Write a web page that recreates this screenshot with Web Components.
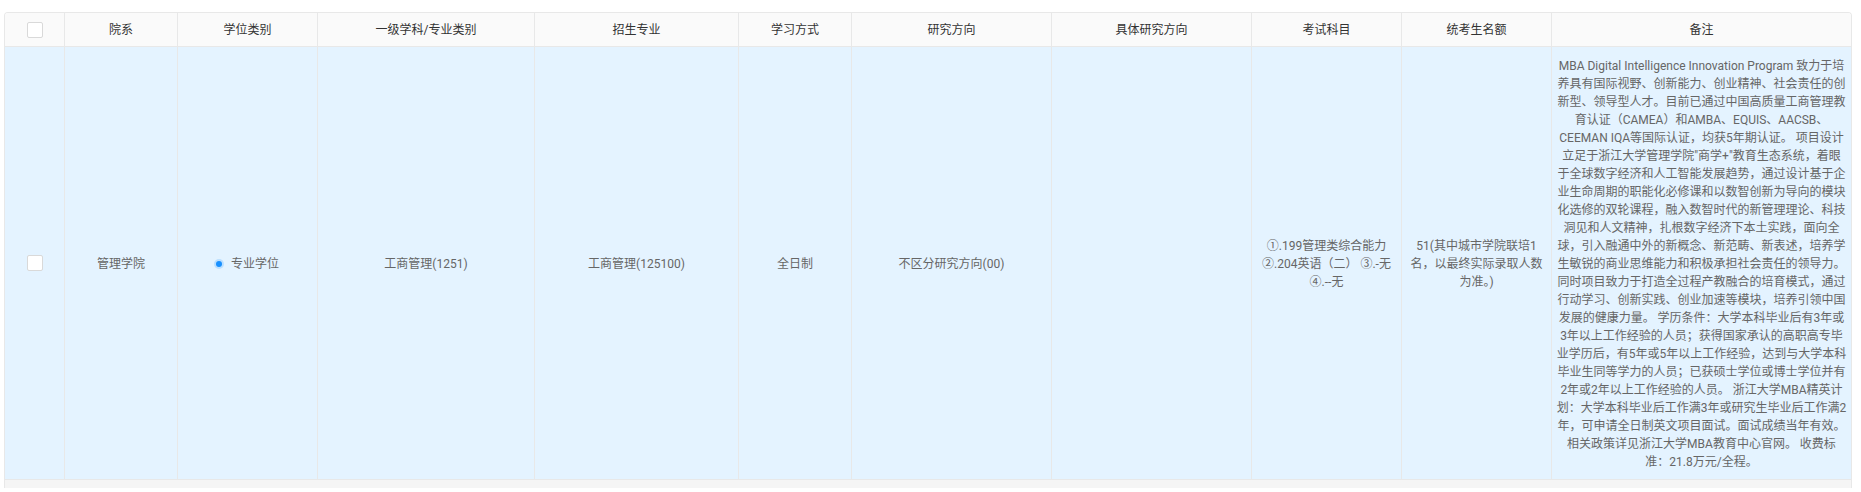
<!DOCTYPE html>
<html lang="zh"><head><meta charset="utf-8"><title>招生专业</title>
<style>
html,body{margin:0;background:#fff}
body{padding:12px 9px 0 4px;font:12px/18px Roboto,"Noto Sans CJK SC",sans-serif;color:#666}
</style></head><body>
<major-table>
  <table-head>
    <table-cell><check-box></check-box></table-cell>
    <table-cell>院系</table-cell><table-cell>学位类别</table-cell><table-cell>一级学科/专业类别</table-cell>
    <table-cell>招生专业</table-cell><table-cell>学习方式</table-cell><table-cell>研究方向</table-cell>
    <table-cell>具体研究方向</table-cell><table-cell>考试科目</table-cell><table-cell>统考生名额</table-cell><table-cell>备注</table-cell>
  </table-head>
  <table-row>
    <table-cell flush><check-box></check-box></table-cell>
    <table-cell>管理学院</table-cell>
    <table-cell><radio-tag>专业学位</radio-tag></table-cell>
    <table-cell>工商管理(1251)</table-cell>
    <table-cell>工商管理(125100)</table-cell>
    <table-cell>全日制</table-cell>
    <table-cell>不区分研究方向(00)</table-cell>
    <table-cell></table-cell>
    <table-cell>①.199管理类综合能力<br>②.204英语（二） ③.-无<br>④.--无</table-cell>
    <table-cell>51(其中城市学院联培1<br>名，以最终实际录取人数<br>为准。)</table-cell>
    <table-cell>MBA Digital Intelligence Innovation Program 致力于培<br>养具有国际视野、创新能力、创业精神、社会责任的创<br>新型、领导型人才。目前已通过中国高质量工商管理教<br>育认证（CAMEA）和AMBA、EQUIS、AACSB、<br>CEEMAN IQA等国际认证，均获5年期认证。 项目设计<br>立足于浙江大学管理学院"商学+"教育生态系统，着眼<br>于全球数字经济和人工智能发展趋势，通过设计基于企<br>业生命周期的职能化必修课和以数智创新为导向的模块<br>化选修的双轮课程，融入数智时代的新管理理论、科技<br>洞见和人文精神，扎根数字经济下本土实践，面向全<br>球，引入融通中外的新概念、新范畴、新表述，培养学<br>生敏锐的商业思维能力和积极承担社会责任的领导力。<br>同时项目致力于打造全过程产教融合的培育模式，通过<br>行动学习、创新实践、创业加速等模块，培养引领中国<br>发展的健康力量。 学历条件：大学本科毕业后有3年或<br>3年以上工作经验的人员；获得国家承认的高职高专毕<br>业学历后，有5年或5年以上工作经验，达到与大学本科<br>毕业生同等学力的人员；已获硕士学位或博士学位并有<br>2年或2年以上工作经验的人员。 浙江大学MBA精英计<br>划：大学本科毕业后工作满3年或研究生毕业后工作满2<br>年，可申请全日制英文项目面试。面试成绩当年有效。<br>相关政策详见浙江大学MBA教育中心官网。 收费标<br>准：21.8万元/全程。</table-cell>
  </table-row>
</major-table>
<script>
const def=(name,css,html='<slot></slot>')=>customElements.define(name,class extends HTMLElement{
  constructor(){super();this.attachShadow({mode:'open'}).innerHTML=`<style>${css}</style>${html}`;}
});
const cols='60px 113px 140px 217px 204px 113px 200px 200px 150px 150px 1fr';
def('major-table',`:host{display:block;border:1px solid #e8e8e8;border-bottom:0;border-radius:4px 4px 0 0;overflow:hidden;--cols:${cols}}
 .strip{height:8px;background:#f5f5f5;margin:0 -1px}`,'<slot></slot><div class="strip"></div>');
def('table-head',`:host{display:grid;grid-template-columns:var(--cols);height:33px;background:#fafafa;color:#333;border-bottom:1px solid #e8e8e8}`);
def('table-row',`:host{display:grid;grid-template-columns:var(--cols);min-height:432px;background:#e4f3ff;border-bottom:1px solid #e8e8e8;--cell-top:2px}`);
def('table-cell',`:host{display:flex;align-items:center;justify-content:center;text-align:center;padding:var(--cell-top,0) 6px 0;border-right:1px solid #e8e8e8;white-space:nowrap;min-width:0}
 :host(:last-child){border-right:0}
 :host([flush]){padding-top:0}`);
def('check-box',`:host{display:block;width:16px;height:16px;box-sizing:border-box;background:#fff;border:1px solid #d9d9d9;border-radius:2px}`,'');
def('radio-tag',`:host{display:inline-flex;align-items:center;gap:9px}
 .dot{width:6px;height:6px;border-radius:50%;background:#1890ff;box-shadow:0 0 0 2px rgba(24,144,255,.2)}`,'<span class="dot"></span><slot></slot>');
</script>
</body></html>
